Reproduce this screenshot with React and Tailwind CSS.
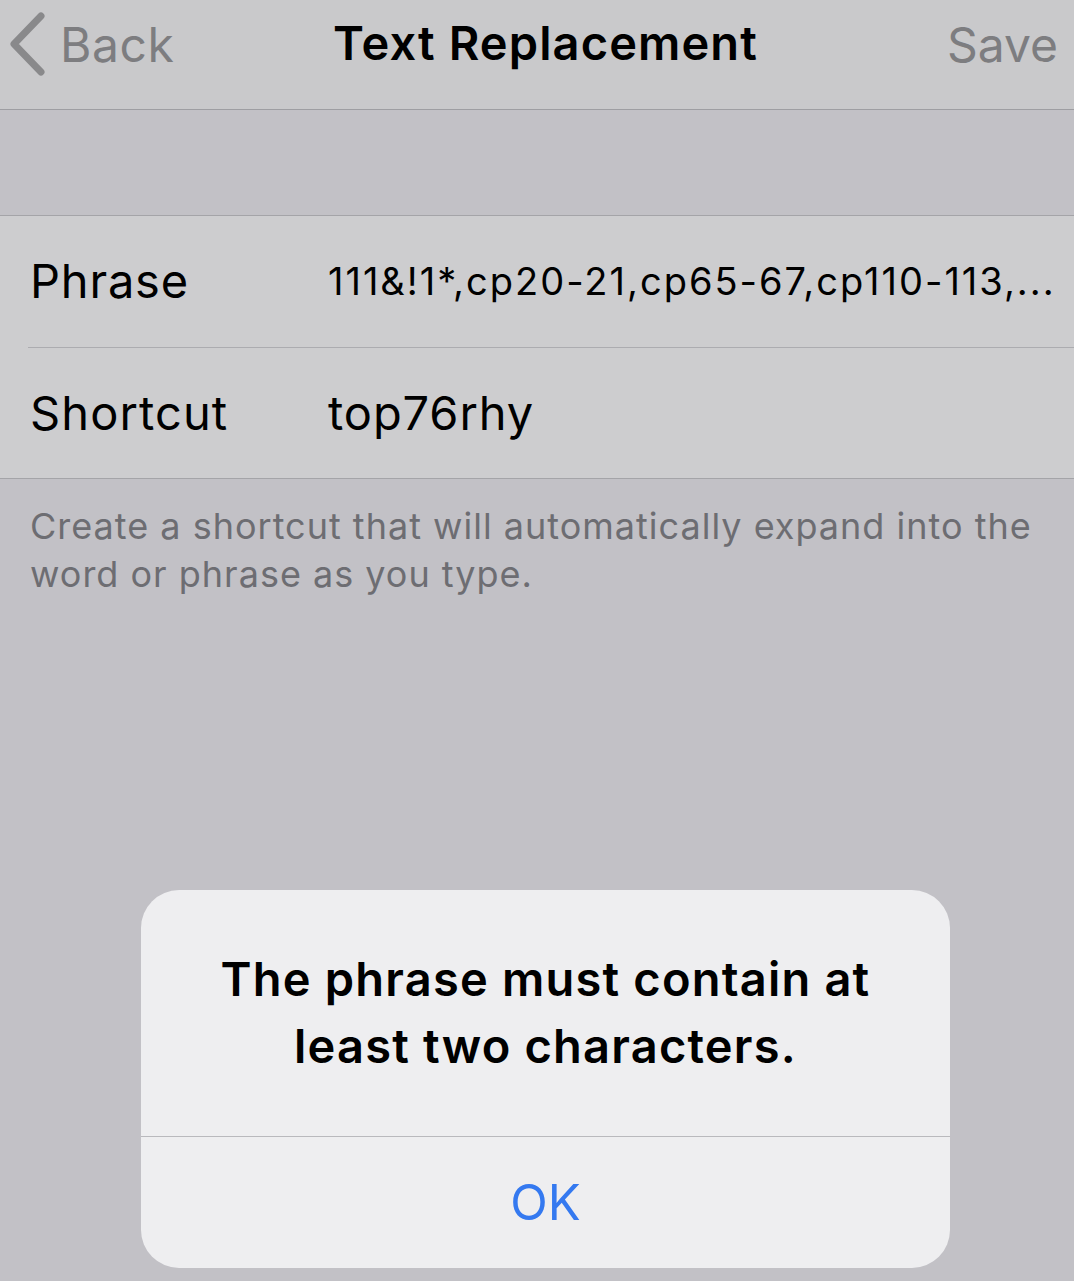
import React from 'react';

const font = { fontFamily: 'Inter, "Noto Sans", sans-serif' };

function Chevron() {
  return (
    <svg width="40" height="66" viewBox="0 0 40 66" className="shrink-0">
      <path d="M33 4 L6 32 L33 60" fill="none" stroke="#89898b" strokeWidth="7" strokeLinecap="round" strokeLinejoin="round" />
    </svg>
  );
}

export default function App() {
  return (
    <div className="relative w-[1074px] h-[1281px] overflow-hidden bg-[#c2c1c6] antialiased" style={font}>
      {/* Nav bar */}
      <div className="h-[110px] bg-[#c9c9cb] border-b border-[#9e9ea2] flex items-center justify-between pl-[8px] pr-[16px] relative">
        <div className="flex items-center gap-[12px] text-[#7d7d80] text-[48px] leading-none -mt-[20px]">
          <Chevron />
          <span className="tracking-[0.6px]">Back</span>
        </div>
        <div className="absolute left-[17px] right-0 top-[19px] text-center text-black text-[47px] font-semibold leading-none tracking-[1.1px]">
          Text Replacement
        </div>
        <span className="text-[#7d7d80] text-[48px] leading-none -mt-[20px]">Save</span>
      </div>

      <div className="h-[105px]" />

      {/* Rows */}
      <div className="bg-[#cdcdcf] border-y border-[#a4a4a8]">
        <div className="h-[131px] flex items-center pl-[30px]">
          <span className="w-[298px] text-[47px] text-black tracking-[0.8px]">Phrase</span>
          <span className="flex-1 text-[38px] text-black whitespace-nowrap overflow-hidden tracking-[2px] pr-[10px]">
            111&amp;!1*,cp20-21,cp65-67,cp110-113,...
          </span>
        </div>
        <div className="ml-[28px] h-px bg-[#acacb0]" />
        <div className="h-[130px] flex items-center pl-[30px]">
          <span className="w-[298px] text-[47px] text-black tracking-[1.1px]">Shortcut</span>
          <span className="text-[47px] text-black tracking-[0.9px]">top76rhy</span>
        </div>
      </div>

      <p className="px-[30px] pt-[23px] text-[36px] leading-[48px] text-[#6d6d72] tracking-[1px]">
        Create a shortcut that will automatically expand into the word or phrase as you type.
      </p>

      {/* Alert */}
      <div className="absolute left-[141px] top-[890px] w-[809px] h-[378px] rounded-[38px] bg-[#eeeef0] flex flex-col overflow-hidden">
        <div className="h-[246px] flex items-center justify-center px-[30px]">
          <p className="text-center text-[47px] leading-[67px] font-semibold text-black tracking-[1.2px] -mt-[2px]">
            The phrase must contain at<br />least two characters.
          </p>
        </div>
        <div className="h-px bg-[#b9b9bd]" />
        <div className="flex-1 flex items-center justify-center">
          <span className="text-[49px] text-[#3479f0] leading-none">OK</span>
        </div>
      </div>
    </div>
  );
}
